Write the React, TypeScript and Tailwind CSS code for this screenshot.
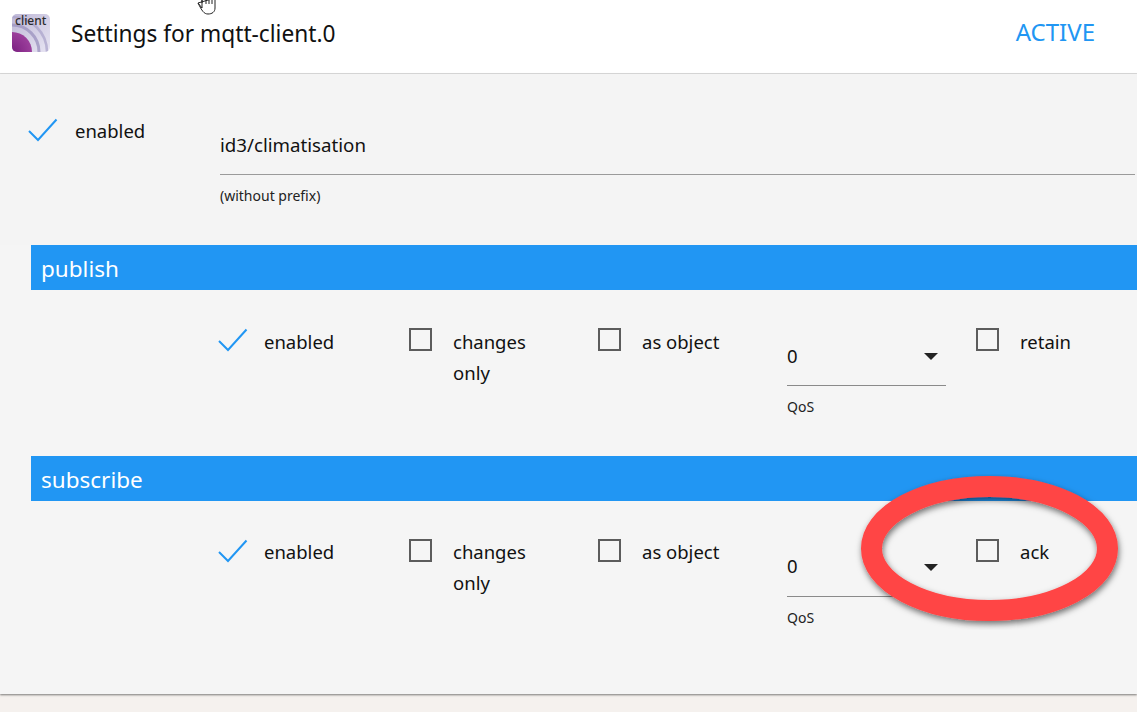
const font = { fontFamily: '"Noto Sans", sans-serif' };

function Tick({ className = '' }: { className?: string }) {
  return (
    <svg width="30" height="24" viewBox="0 0 30 24" className={className}>
      <path d="M1 13 L10 22 L28.5 1.5" fill="none" stroke="#2196f3" strokeWidth="2" />
    </svg>
  );
}

function Box() {
  return <div className="w-[23px] h-[23px] border-2 border-[#5c5c5c] shrink-0" />;
}

function Option({ checked, label, width, labelTop }: { checked?: boolean; label: string; width: string; labelTop: string }) {
  return (
    <div className={`flex items-start shrink-0 ${width}`}>
      <div className={`${checked ? 'w-[46px]' : 'w-[44px]'} h-[31px] shrink-0`}>{checked ? <Tick /> : <Box />}</div>
      <div className={`text-[18.5px] leading-[31px] text-[#111] w-[90px] ${labelTop}`}>{label}</div>
    </div>
  );
}

function QosSelect({ valueTop }: { valueTop: string }) {
  return (
    <div className="w-[159px] shrink-0 mr-[30px]">
      <div className="h-[60px] border-b border-[#8a8a8a] flex items-center justify-between pr-[8px] pt-[1px]">
        <span className={`text-[18.5px] text-[#111] ${valueTop}`}>0</span>
        <div className="w-0 h-0 border-l-[7px] border-r-[7px] border-t-[7px] border-l-transparent border-r-transparent border-t-[#222]" />
      </div>
      <div className="text-[14px] leading-[18px] mt-[12px] text-[#222]">QoS</div>
    </div>
  );
}

function Section({ title, last, labelTop, valueTop }: { title: string; last: string; labelTop: string; valueTop: string }) {
  return (
    <section>
      <div className="ml-[31px] h-[45px] bg-[#2196f3] text-white text-[22.5px] flex items-center pl-[10px] pt-[2px]">{title}</div>
      <div className="flex items-start pl-[218px] pt-[38px]">
        <Option checked label="enabled" width="w-[191px]" labelTop={labelTop} />
        <Option label="changes only" width="w-[189px]" labelTop={labelTop} />
        <Option label="as object" width="w-[189px]" labelTop={labelTop} />
        <div className="mt-[-2px]"><QosSelect valueTop={valueTop} /></div>
        <Option label={last} width="w-[140px]" labelTop={labelTop} />
      </div>
    </section>
  );
}

function Logo() {
  return (
    <div className="relative w-[38px] h-[38px] shrink-0">
      <svg width="38" height="38" viewBox="0 0 38 38" className="block rounded-[5px]">
        <defs>
          <linearGradient id="bg" x1="0" y1="0" x2="1" y2="1">
            <stop offset="0" stopColor="#bdb7d6" />
            <stop offset="1" stopColor="#e8e5f3" />
          </linearGradient>
          <radialGradient id="core" gradientUnits="userSpaceOnUse" cx="0" cy="38" r="20">
            <stop offset="0" stopColor="#7a1f80" />
            <stop offset="1" stopColor="#9c3f9c" />
          </radialGradient>
        </defs>
        <rect width="38" height="38" fill="url(#bg)" />
        <circle cx="0" cy="38" r="35" fill="none" stroke="#a8a1c9" strokeWidth="2.5" opacity="0.7" />
        <circle cx="0" cy="38" r="27" fill="none" stroke="#9d95c1" strokeWidth="3" opacity="0.8" />
        <circle cx="0" cy="38" r="20" fill="url(#core)" />
      </svg>
      <span className="absolute left-[3px] top-0 text-[12px] leading-[14px] font-medium text-[#2b2b2b]">client</span>
    </div>
  );
}

export default function App() {
  return (
    <div className="relative w-[1137px] h-[712px] overflow-hidden bg-[#f5f1ee]" style={font}>
      <header className="h-[74px] bg-white border-b border-[#dcdcdc] flex items-center pl-[12px] pr-[42px]">
        <div className="mt-[-8px]"><Logo /></div>
        <h1 className="ml-[21px] mt-[-4px] text-[22.7px] text-[#111]">Settings for mqtt-client.0</h1>
        <div className="ml-auto mt-[-10px] text-[24px] text-[#2196f3]">ACTIVE</div>
      </header>

      <main className="h-[620px] bg-[#f5f5f5] shadow-[0_1px_2px_rgba(0,0,0,0.5)]">
        <div className="flex items-start h-[171px] bg-[#f4f4f4]">
          <div className="flex items-start pl-[28px] pt-[44px] w-[220px] shrink-0">
            <Tick />
            <span className="ml-[17px] mt-[-3px] text-[18.5px] leading-[31px] text-[#111]">enabled</span>
          </div>
          <div className="flex-1 pt-[52px] mr-[2px]">
            <div className="h-[49px] border-b border-[#9a9a9a] text-[18.7px] text-[#111] leading-[38px]">id3/climatisation</div>
            <div className="text-[14px] leading-[18px] mt-[12px] text-[#222]">(without prefix)</div>
          </div>
        </div>
        <Section title="publish" last="retain" labelTop="mt-[-2px]" valueTop="" />
        <div className="h-[40px]" />
        <Section title="subscribe" last="ack" labelTop="mt-[-3px]" valueTop="mt-[-2px]" />
      </main>

      {/* red marker drawn over the screenshot */}
      <svg width="300" height="190" viewBox="0 0 300 190" className="absolute left-[840px] top-[460px] pointer-events-none">
        <defs>
          <filter id="sh" x="-10%" y="-10%" width="120%" height="125%">
            <feDropShadow dx="1" dy="3" stdDeviation="3" floodColor="#000" floodOpacity="0.55" />
          </filter>
        </defs>
        <ellipse cx="149.5" cy="88.5" rx="118" ry="62" fill="none" stroke="#ff4444" strokeWidth="21" filter="url(#sh)" />
      </svg>

      {/* mouse pointer */}
      <svg width="20" height="16" viewBox="0 0 20 16" className="absolute left-[197px] top-0 pointer-events-none">
        <path d="M1 3 L5 8 V-2 M5 3 V-2 M9 -2 V4 M12 -2 V4 M15 -2 V4 M18 -2 V8 C18 12 15 14 11 14 C7 14 5 11 1 3 Z" fill="#fff" stroke="#222" strokeWidth="1" />
      </svg>
    </div>
  );
}
